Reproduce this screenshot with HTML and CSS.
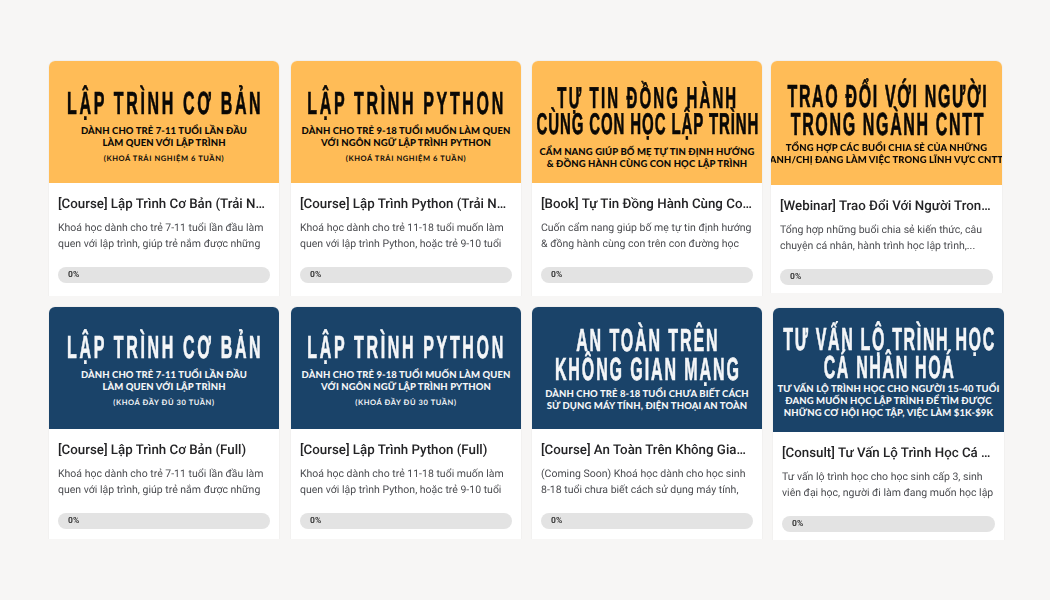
FILE: index.html
```html
<!DOCTYPE html>
<html lang="vi">
<head>
<meta charset="utf-8">
<title>Courses</title>
<link rel="stylesheet" href="styles.css">
</head>
<body>
<main class="grid">
  <article class="card">
    <div class="thumb orange"><h2>LẬP TRÌNH CƠ BẢN</h2><p class="sub">DÀNH CHO TRẺ 7-11 TUỔI LẦN ĐẦU<br>LÀM QUEN VỚI LẬP TRÌNH</p><p class="note">(KHOÁ TRẢI NGHIỆM 6 TUẦN)</p></div>
    <div class="body"><h3>[Course] Lập Trình Cơ Bản (Trải Nghiệm)</h3><p class="desc">Khoá học dành cho trẻ 7-11 tuổi lần đầu làm quen với lập trình, giúp trẻ nắm được những</p><div class="bar">0%</div></div>
  </article>
  <article class="card">
    <div class="thumb orange"><h2>LẬP TRÌNH PYTHON</h2><p class="sub">DÀNH CHO TRẺ 9-18 TUỔI MUỐN LÀM QUEN<br>VỚI NGÔN NGỮ LẬP TRÌNH PYTHON</p><p class="note">(KHOÁ TRẢI NGHIỆM 6 TUẦN)</p></div>
    <div class="body"><h3>[Course] Lập Trình Python (Trải Nghiệm)</h3><p class="desc">Khoá học dành cho trẻ 11-18 tuổi muốn làm quen với lập trình Python, hoặc trẻ 9-10 tuổi</p><div class="bar">0%</div></div>
  </article>
  <article class="card">
    <div class="thumb orange thumb-book"><h2 class="tight"><span class="wide">TỰ TIN ĐỒNG HÀNH</span><br>CÙNG CON HỌC LẬP TRÌNH</h2><p class="sub">CẨM NANG GIÚP BỐ MẸ TỰ TIN ĐỊNH HƯỚNG<br>&amp; ĐỒNG HÀNH CÙNG CON HỌC LẬP TRÌNH</p></div>
    <div class="body"><h3>[Book] Tự Tin Đồng Hành Cùng Con Học Lập Trình</h3><p class="desc">Cuốn cẩm nang giúp bố mẹ tự tin định hướng &amp; đồng hành cùng con trên con đường học</p><div class="bar">0%</div></div>
  </article>
  <article class="card card-tall">
    <div class="thumb orange thumb-tall"><h2 class="snug">TRAO ĐỔI VỚI NGƯỜI<br>TRONG NGÀNH CNTT</h2><p class="sub">TỔNG HỢP CÁC BUỔI CHIA SẺ CỦA NHỮNG<br>ANH/CHỊ ĐANG LÀM VIỆC TRONG LĨNH VỰC CNTT</p></div>
    <div class="body"><h3>[Webinar] Trao Đổi Với Người Trong Ngành CNTT</h3><p class="desc">Tổng hợp những buổi chia sẻ kiến thức, câu chuyện cá nhân, hành trình học lập trình,...</p><div class="bar">0%</div></div>
  </article>
  <article class="card">
    <div class="thumb navy thumb-mid"><h2>LẬP TRÌNH CƠ BẢN</h2><p class="sub">DÀNH CHO TRẺ 7-11 TUỔI LẦN ĐẦU<br>LÀM QUEN VỚI LẬP TRÌNH</p><p class="note">(KHOÁ ĐẦY ĐỦ 30 TUẦN)</p></div>
    <div class="body"><h3>[Course] Lập Trình Cơ Bản (Full)</h3><p class="desc">Khoá học dành cho trẻ 7-11 tuổi lần đầu làm quen với lập trình, giúp trẻ nắm được những</p><div class="bar">0%</div></div>
  </article>
  <article class="card">
    <div class="thumb navy thumb-mid"><h2>LẬP TRÌNH PYTHON</h2><p class="sub">DÀNH CHO TRẺ 9-18 TUỔI MUỐN LÀM QUEN<br>VỚI NGÔN NGỮ LẬP TRÌNH PYTHON</p><p class="note">(KHOÁ ĐẦY ĐỦ 30 TUẦN)</p></div>
    <div class="body"><h3>[Course] Lập Trình Python (Full)</h3><p class="desc">Khoá học dành cho trẻ 11-18 tuổi muốn làm quen với lập trình Python, hoặc trẻ 9-10 tuổi</p><div class="bar">0%</div></div>
  </article>
  <article class="card">
    <div class="thumb navy thumb-two"><h2 class="roomy">AN TOÀN TRÊN<br>KHÔNG GIAN MẠNG</h2><p class="sub">DÀNH CHO TRẺ 8-18 TUỔI CHƯA BIẾT CÁCH<br>SỬ DỤNG MÁY TÍNH, ĐIỆN THOẠI AN TOÀN</p></div>
    <div class="body"><h3>[Course] An Toàn Trên Không Gian Mạng</h3><p class="desc">(Coming Soon) Khoá học dành cho học sinh <span class="nowrap">8-18</span> tuổi chưa biết cách sử dụng máy tính,</p><div class="bar">0%</div></div>
  </article>
  <article class="card card-shift">
    <div class="thumb navy thumb-consult"><h2 class="snug">TƯ VẤN LỘ TRÌNH HỌC<br>CÁ NHÂN HOÁ</h2><p class="sub">TƯ VẤN LỘ TRÌNH HỌC CHO NGƯỜI 15-40 TUỔI<br>ĐANG MUỐN HỌC LẬP TRÌNH ĐỂ TÌM ĐƯỢC<br>NHỮNG CƠ HỘI HỌC TẬP, VIỆC LÀM $1K-$9K</p></div>
    <div class="body"><h3>[Consult] Tư Vấn Lộ Trình Học Cá Nhân Hoá</h3><p class="desc">Tư vấn lộ trình học cho học sinh cấp 3, sinh viên đại học, người đi làm đang muốn học lập</p><div class="bar">0%</div></div>
  </article>
</main>
</body>
</html>
```
FILE: styles.css
```css
* { box-sizing: border-box; }
html, body { margin: 0; height: 600px; overflow: hidden; background: #f7f6f5; }
.grid {
  display: grid;
  grid-template-columns: 242px 241px 239px 233px;
  grid-template-rows: 246px 232px;
  padding: 61px 0 0 49px;
  filter: blur(0.35px);
  font-family: Roboto, "Liberation Sans", sans-serif;
  text-rendering: geometricPrecision;
}
.card {
  width: 230px;
  height: 235px;
  background: #fff;
  border-radius: 6px 6px 0 0;
  overflow: hidden;
  box-shadow: 0 -1px 0 #f0efee, 1px 0 0 #f2f1f0, -1px 0 0 #f2f1f0;
}
.grid .card:nth-child(n+5) { height: 232px; }
.card-tall { width: 231px; height: 232px; }
.card-shift { margin: 1px 0 0 2px; width: 231px; }
.thumb {
  height: 122px;
  padding-top: 8px;
  display: flex;
  flex-direction: column;
  align-items: center;
  justify-content: center;
  text-align: center;
  white-space: nowrap;
}
.thumb-mid { padding-top: 5px; }
.thumb-tall { height: 124px; padding-top: 2px; }
.thumb-two { padding-top: 3px; }
.thumb-consult { height: 124px; padding-top: 4px; }
.thumb-book { padding-top: 12px; }
.orange { background: #ffbc57; color: #0a0806; }
.navy { background: #1a4369; color: #f4f6f8; }
.thumb h2 {
  margin: 0 0 8px;
  padding-left: 4px;
  font-family: "Liberation Sans", sans-serif;
  font-size: 32px;
  line-height: 29px;
  font-weight: 700;
  letter-spacing: 5.3px;
  transform: scaleX(0.5);
  -webkit-text-stroke: 0.7px currentColor;
}
.thumb h2.tight { font-size: 30px; line-height: 26px; letter-spacing: 1.8px; margin-bottom: 9px; }
.thumb h2 .wide { letter-spacing: 4.3px; }
.thumb h2.snug { line-height: 28px; letter-spacing: 3.3px; margin-bottom: 5px; }
.thumb-consult h2.snug { margin-bottom: 3px; }
.thumb h2.roomy { letter-spacing: 3.8px; margin-bottom: 5px; }
.sub {
  margin: 0;
  font-family: Lato, sans-serif;
  font-size: 9.5px;
  line-height: 12px;
  font-weight: 900;
  letter-spacing: 0.1px;
}
.note {
  margin: 3px 0 0;
  font-family: Lato, sans-serif;
  font-size: 7.5px;
  line-height: 11px;
  font-weight: 700;
  letter-spacing: 0.6px;
}
.body { padding: 12px 9px 0; }
.body h3 {
  margin: 0;
  font-size: 13.3px;
  line-height: 20px;
  font-weight: 500;
  color: #232325;
  white-space: nowrap;
  overflow: hidden;
  text-overflow: ellipsis;
}
.desc {
  margin: 5px -6px 0 0;
  height: 32px;
  font-size: 10.5px;
  line-height: 16px;
  color: #4b4c50;
  overflow: hidden;
}
.nowrap { white-space: nowrap; }
.bar {
  margin-top: 15px;
  height: 16px;
  border-radius: 8px;
  background: #e3e3e3;
  padding-left: 10px;
  font-size: 8.5px;
  line-height: 16px;
  font-weight: 700;
  color: #3a3a3a;
}
```
